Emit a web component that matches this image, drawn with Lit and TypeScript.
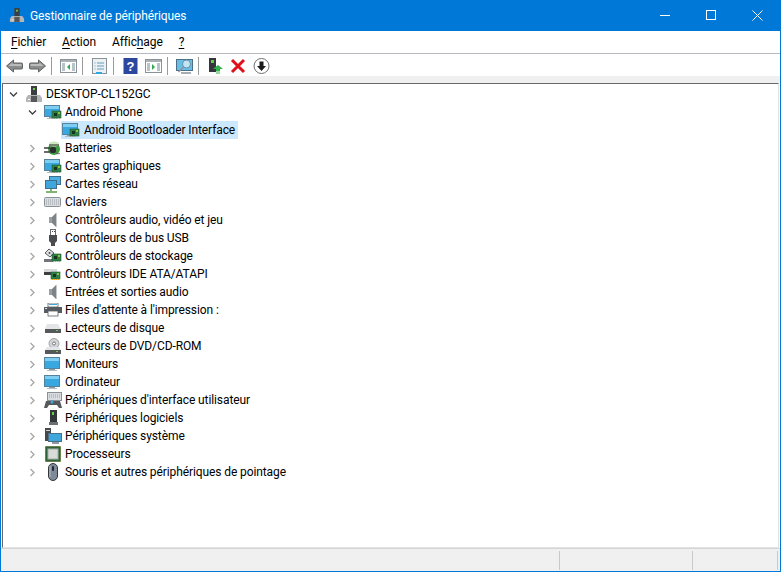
import { LitElement, html, css, svg } from 'lit';
import { customElement } from 'lit/decorators.js';

const screen = (x = 0, y = 0) => svg`
  <rect x="${x + 0.5}" y="${y + 0.5}" width="15" height="11" fill="#3aa8e0" stroke="#55839e"/>
  <rect x="${x + 1}" y="${y + 1}" width="14" height="3" fill="#7fcdf0"/>
  <rect x="${x + 5}" y="${y + 12}" width="6" height="1" fill="#8f9aa3"/>
  <rect x="${x + 3}" y="${y + 13}" width="10" height="1" fill="#b4bcc2"/>`;

const card = (x = 8, y = 7) => svg`
  <rect x="${x}" y="${y}" width="9" height="7" fill="#2d7f45" stroke="#245c34" stroke-width="0.6"/>
  <rect x="${x + 2}" y="${y + 2}" width="3" height="3" fill="#16331f"/>
  <rect x="${x + 6}" y="${y + 1}" width="2" height="2" fill="#8cc63f"/>
  <path d="M${x + 1} ${y + 7.5}h7" stroke="#e3a21a" stroke-dasharray="1 1"/>`;

const adapter = html`<svg viewBox="0 0 18 16">${screen(0, 1)}${card(8, 7)}</svg>`;

const speaker = html`<svg viewBox="0 0 18 16">
  <rect x="5" y="5" width="3" height="6" fill="#9a9fa3"/>
  <path d="M8 5l4-4h1v14h-1l-4-4z" fill="#7d8387"/>
  <path d="M12 1h1v14h-1z" fill="#c5c9cc"/>
</svg>`;

const icons: Record<string, unknown> = {
  computer: html`<svg viewBox="0 0 18 16">
    <rect x="6" y="0" width="6" height="10" fill="#3c3f42"/>
    <rect x="8" y="2" width="2" height="2" fill="#6fce4d"/>
    <path d="M3 9h12l2 3v4H1v-4z" fill="#b3b5b7"/>
    <rect x="6" y="10" width="6" height="6" fill="#55585b"/>
    <rect x="3" y="13" width="2" height="1" fill="#fff"/>
  </svg>`,
  adapter,
  battery: html`<svg viewBox="0 0 18 16">
    <ellipse cx="10" cy="9" rx="6" ry="6" fill="#3f9b42"/>
    <ellipse cx="10" cy="4" rx="5" ry="2.5" fill="#cfe8c4"/>
    <path d="M5 5h10" stroke="#222"/>
    <rect x="6" y="7" width="6" height="6" rx="2" fill="#2b2d2f"/>
    <path d="M0 8h6M0 12h6" stroke="#3a3c3e" stroke-width="1.5"/>
    <path d="M12 13c2 1 3 1 4 0" stroke="#555" fill="none"/>
  </svg>`,
  network: html`<svg viewBox="0 0 18 17">
    <rect x="5.5" y="0.5" width="11" height="8" fill="#4cb0e2" stroke="#3e6f8c"/>
    <rect x="1.5" y="4.5" width="11" height="8" fill="#3fa6dc" stroke="#3e6f8c"/>
    <path d="M7 13v2M2 16h11" stroke="#5a9c4a" stroke-width="1.5"/>
  </svg>`,
  keyboard: html`<svg viewBox="0 0 18 12">
    <rect x="0.5" y="1.5" width="16" height="9" rx="1" fill="#d9dce0" stroke="#8b9096"/>
    <path d="M2 4h13M2 6h13M2 8h13" stroke="#9aa0a6" stroke-dasharray="1 1"/>
  </svg>`,
  speaker,
  usb: html`<svg viewBox="0 0 18 18">
    <rect x="6.5" y="0.5" width="5" height="6" fill="#fff" stroke="#6a6d70"/>
    <rect x="8" y="2" width="1" height="1" fill="#444"/><rect x="10" y="2" width="1" height="1" fill="#444"/>
    <path d="M5 6h8v6l-2 2v3H7v-3l-2-2z" fill="#4a4d50"/>
  </svg>`,
  storage: html`<svg viewBox="0 0 18 16">
    <path d="M1 5l4-4 5 4-4 4z" fill="#dfe1e3" stroke="#55585b"/>
    <circle cx="5.5" cy="5" r="1" fill="#44484b"/>
    <path d="M0 11h9v3H0z" fill="#70757a"/>
    ${card(8, 6)}
  </svg>`,
  ide: html`<svg viewBox="0 0 18 16">
    <rect x="0" y="3" width="13" height="3" fill="#d6d8da"/>
    <rect x="0" y="6" width="13" height="3" fill="#3c3f42"/>
    ${card(7, 6)}
  </svg>`,
  printer: html`<svg viewBox="0 0 18 14">
    <rect x="4" y="0" width="10" height="4" fill="#fff" stroke="#5b6065" stroke-width="0.8"/>
    <rect x="5" y="1" width="8" height="1" fill="#3fa6dc"/>
    <rect x="0" y="4" width="18" height="6" fill="#585c60"/>
    <rect x="4" y="8" width="10" height="5" fill="#fff" stroke="#5b6065" stroke-width="0.8"/>
    <rect x="1" y="5" width="2" height="1" fill="#cfe3ef"/>
  </svg>`,
  disk: html`<svg viewBox="0 0 18 12">
    <path d="M3 2h11l3 5H1z" fill="#e3e5e6"/>
    <rect x="1" y="7" width="16" height="4" fill="#55595c"/>
    <rect x="12" y="8" width="2" height="1" fill="#6fce4d"/>
  </svg>`,
  dvd: html`<svg viewBox="0 0 18 17">
    <circle cx="10" cy="5.5" r="5" fill="#d2d5d8" stroke="#8d9296" stroke-width="0.8"/>
    <circle cx="10" cy="5.5" r="1.5" fill="#fff" stroke="#777"/>
    <path d="M3 9h12l2 3H1z" fill="#e3e5e6"/>
    <rect x="1" y="12" width="16" height="4" fill="#55595c"/>
    <rect x="12" y="13" width="2" height="1" fill="#6fce4d"/>
  </svg>`,
  monitor: html`<svg viewBox="0 0 18 16">${screen(0, 1)}</svg>`,
  hid: html`<svg viewBox="0 0 18 17">
    <rect x="3.5" y="0.5" width="14" height="8" fill="#d9dce0" stroke="#8b9096"/>
    <path d="M5 3h11M5 5h11" stroke="#9aa0a6" stroke-dasharray="1 1"/>
    <path d="M2 9h14l2 7h-3l-2-3H5l-2 3H0z" fill="#55595c"/>
    <circle cx="8" cy="10" r="1.5" fill="#3fa6dc"/>
  </svg>`,
  software: html`<svg viewBox="0 0 18 18">
    <rect x="6" y="1" width="7" height="12" fill="#33363a"/>
    <rect x="8" y="3" width="2" height="3" fill="#63d04a"/>
    <rect x="5" y="13" width="9" height="3" fill="#6c7074"/>
  </svg>`,
  system: html`<svg viewBox="0 0 18 17">
    <rect x="1" y="0" width="6" height="13" fill="#45494c"/>
    <rect x="2" y="2" width="4" height="1" fill="#cfd3d6"/>
    <rect x="4.5" y="5.5" width="13" height="8" fill="#3fa6dc" stroke="#4a6f86"/>
    <path d="M8 15h7" stroke="#8f9aa3" stroke-width="2"/>
  </svg>`,
  cpu: html`<svg viewBox="0 0 18 18">
    <rect x="1.500" y="1.500" width="15" height="15" fill="#31683c" stroke="#b59a3a" stroke-dasharray="1 1"/>
    <rect x="2" y="2" width="14" height="14" fill="none" stroke="#2f5f38"/>
    <rect x="4" y="4" width="10" height="10" fill="#d7dcd8" stroke="#a8afaa"/>
  </svg>`,
  mouse: html`<svg viewBox="0 0 18 18">
    <rect x="4.500" y="0.500" width="9" height="17" rx="4.500" fill="#7e8a99" stroke="#33373b"/>
    <rect x="8" y="3" width="2" height="5" rx="1" fill="#22262a"/>
    <path d="M6 3v11" stroke="#b4bec8"/>
  </svg>`,
};

const groups: [string, string][] = [
  ['battery', 'Batteries'],
  ['adapter', 'Cartes graphiques'],
  ['network', 'Cartes réseau'],
  ['keyboard', 'Claviers'],
  ['speaker', 'Contrôleurs audio, vidéo et jeu'],
  ['usb', 'Contrôleurs de bus USB'],
  ['storage', 'Contrôleurs de stockage'],
  ['ide', 'Contrôleurs IDE ATA/ATAPI'],
  ['speaker', 'Entrées et sorties audio'],
  ['printer', "Files d'attente à l'impression :"],
  ['disk', 'Lecteurs de disque'],
  ['dvd', 'Lecteurs de DVD/CD-ROM'],
  ['monitor', 'Moniteurs'],
  ['monitor', 'Ordinateur'],
  ['hid', "Périphériques d'interface utilisateur"],
  ['software', 'Périphériques logiciels'],
  ['system', 'Périphériques système'],
  ['cpu', 'Processeurs'],
  ['mouse', 'Souris et autres périphériques de pointage'],
];

const chevronDown = html`<svg class="chev" viewBox="0 0 9 9"><path d="M1 2.500l3.500 3.500 3.500-3.500" fill="none" stroke="#404040" stroke-width="1.300"/></svg>`;
const chevronRight = html`<svg class="chev" viewBox="0 0 9 9"><path d="M2.500 1l3.500 3.500-3.500 3.500" fill="none" stroke="#a6a6a6" stroke-width="1.300"/></svg>`;

const arrow = (flip: boolean) => html`<svg class="tool" viewBox="0 0 17 16" style="transform:${flip ? 'scaleX(-1)' : 'none'}">
  <path d="M0.500 8l7-6v3h8a1 1 0 0 1 1 1v4a1 1 0 0 1-1 1h-8v3z" fill="#8a8d8b" stroke="#5f6361"/>
  <path d="M2.500 8l4-3.500v1.500h9v2z" fill="#b9bcba"/>
</svg>`;

const pane = (side: 'l' | 'r') => html`<svg class="tool" viewBox="0 0 17 16">
  <rect x="0.500" y="1.500" width="16" height="13" fill="#fff" stroke="#8a9298"/>
  <rect x="1" y="2" width="15" height="2" fill="#a9b1b7"/>
  <path d="M2 6h3M2 8h3M2 10h3M2 12h3M12 6h3M12 8h3M12 10h3M12 12h3" stroke="#6f8797"/>
  <path d="${side === 'l' ? 'M10 6v6l-3-3z' : 'M7 6v6l3-3z'}" fill="#2fa84f"/>
</svg>`;

@customElement('app-root')
export class AppRoot extends LitElement {
  static styles = css`
    :host {
      display: block;
      width: 781px;
      height: 572px;
      font-family: Roboto, 'Noto Sans', sans-serif;
      font-size: 12px;
      letter-spacing: -0.1px;
      color: #000;
    }

    .window {
      box-sizing: border-box;
      width: 781px;
      height: 572px;
      display: flex;
      flex-direction: column;
      border: 1px solid #0078d7;
      border-top: 0;
      background: #fff;
      overflow: hidden;
    }

    .titlebar {
      height: 31px;
      flex: none;
      display: flex;
      align-items: center;
      background: #0078d7;
      color: #fff;
      padding-left: 8px;
    }

    .titlebar .app-icon {
      width: 16px;
      height: 16px;
      margin-right: 5px;
    }

    .titlebar .title {
      flex: 1;
    }

    .caption {
      width: 46px;
      height: 31px;
      display: flex;
      align-items: center;
      justify-content: center;
    }

    .caption svg {
      width: 11px;
      height: 11px;
    }

    .menubar {
      height: 22px;
      flex: none;
      display: flex;
      align-items: center;
      gap: 16px;
      padding-left: 10px;
      border-bottom: 1px solid #b9b9c4;
    }

    .menubar u {
      text-underline-offset: 2px;
    }

    .toolbar {
      box-sizing: border-box;
      height: 22px;
      flex: none;
      display: flex;
      align-items: center;
      padding: 2px 0 0 2px;
    }

    .tool {
      width: 17px;
      height: 16px;
      margin: 0 3px;
      flex: none;
    }

    .sep {
      width: 1px;
      height: 18px;
      background: #9a9a9a;
      margin: 0 5px 0 2px;
      flex: none;
    }

    .strip {
      height: 7px;
      flex: none;
      background: #f0f0f0;
    }

    .tree {
      flex: 1;
      margin: 0 1px;
      border-left: 1px solid #696969;
      border-right: 1px solid #e3e3e3;
      border-top: 1px solid #696969;
      border-bottom: 1px solid #e3e3e3;
      padding-top: 1px;
      padding-left: 6px;
      overflow: hidden;
    }

    .row {
      height: 18px;
      display: flex;
      align-items: center;
      white-space: nowrap;
    }

    .row.depth1 {
      padding-left: 19px;
    }

    .row.depth2 {
      padding-left: 52px;
    }

    .chev {
      width: 9px;
      height: 9px;
      margin-right: 7px;
      flex: none;
    }

    .icon {
      width: 18px;
      height: 18px;
      margin-right: 3px;
      flex: none;
      display: flex;
      align-items: center;
      justify-content: center;
    }

    .icon svg {
      width: 18px;
      height: auto;
      display: block;
    }

    .selected {
      display: flex;
      align-items: center;
      height: 18px;
      background: #cce8ff;
      padding: 0 3px 0 1px;
    }

    .selected .icon {
      margin-right: 4px;
    }

    .status {
      height: 23px;
      flex: none;
      display: flex;
      background: #f0f0f0;
      padding-top: 2px;
      box-sizing: border-box;
      border-top: 1px solid #d4d4d4;
    }

    .status div {
      border-right: 1px solid #c8c8c8;
      margin-bottom: 1px;
      box-sizing: border-box;
    }

    .status .main {
      width: 559px;
    }

    .status .a {
      width: 133px;
    }

    .status .b {
      width: 85px;
    }
  `;

  render() {
    return html`
      <div class="window">
        <div class="titlebar">
          <span class="app-icon">${icons.computer}</span>
          <span class="title">Gestionnaire de périphériques</span>
          <span class="caption"><svg viewBox="0 0 11 11"><path d="M0 5.500h10" stroke="#fff"/></svg></span>
          <span class="caption"><svg viewBox="0 0 11 11"><rect x="0.500" y="0.500" width="9" height="9" fill="none" stroke="#fff"/></svg></span>
          <span class="caption"><svg viewBox="0 0 11 11"><path d="M0.500 0.500l10 10M10.500 0.500l-10 10" stroke="#fff"/></svg></span>
        </div>
        <div class="menubar">
          <span><u>F</u>ichier</span>
          <span><u>A</u>ction</span>
          <span>Affic<u>h</u>age</span>
          <span><u>?</u></span>
        </div>
        <div class="toolbar">
          ${arrow(false)} ${arrow(true)}
          <span class="sep"></span>
          ${pane('l')}
          <span class="sep"></span>
          <svg class="tool" viewBox="0 0 17 16">
            <rect x="1.500" y="0.500" width="14" height="15" fill="#eef1f3" stroke="#8a9298"/>
            <path d="M6 5h7M6 8h7M6 11h7" stroke="#5f9ec4"/>
            <path d="M3.500 5h1M3.500 8h1M3.500 11h1" stroke="#5f9ec4"/>
            <rect x="5" y="14" width="6" height="2" fill="#2fa8e0"/>
          </svg>
          <span class="sep"></span>
          <svg class="tool" viewBox="0 0 17 16">
            <rect x="1.500" y="0" width="14" height="16" fill="#2b479e"/>
            <text x="8.500" y="13" font-size="13" font-weight="700" text-anchor="middle" fill="#fff" font-family="Liberation Sans">?</text>
          </svg>
          ${pane('r')}
          <span class="sep"></span>
          <svg class="tool" viewBox="0 0 17 16">
            <rect x="0.500" y="1.500" width="16" height="11" fill="#67bfe8" stroke="#4a6f86"/>
            <circle cx="10.500" cy="6" r="4" fill="#bfe5f6" stroke="#6a8ea3"/>
            <path d="M7.500 9l-5 5M5 15h10" stroke="#8b9298" stroke-width="1.300"/>
          </svg>
          <span class="sep"></span>
          <svg class="tool" viewBox="0 0 17 16">
            <rect x="2" y="0" width="7" height="14" fill="#33363a"/>
            <rect x="4" y="2" width="3" height="3" fill="#63d04a"/>
            <path d="M11 7l5 4h-3v2H9v-2H6z" fill="#2fb04a"/>
            <path d="M9 14h4M9 16h4" stroke="#2fb04a"/>
          </svg>
          <svg class="tool" viewBox="0 0 17 16">
            <path d="M2 2l12 12M14 2L2 14" stroke="#e0101a" stroke-width="3"/>
          </svg>
          <svg class="tool" viewBox="0 0 17 16">
            <circle cx="8.500" cy="8" r="7.500" fill="#fff" stroke="#6c7074"/>
            <path d="M6.500 3.500h4V8H13l-4.500 5L4 8h2.500z" fill="#1a1a1a"/>
          </svg>
        </div>
        <div class="strip"></div>
        <div class="tree">
          <div class="row">
            ${chevronDown}
            <span class="icon">${icons.computer}</span>DESKTOP-CL152GC
          </div>
          <div class="row depth1">
            ${chevronDown}
            <span class="icon">${icons.adapter}</span>Android Phone
          </div>
          <div class="row depth2">
            <span class="selected"><span class="icon">${icons.adapter}</span>Android Bootloader Interface</span>
          </div>
          ${groups.map(
            ([icon, label]) => html`
              <div class="row depth1">
                ${chevronRight}
                <span class="icon">${icons[icon]}</span>${label}
              </div>
            `,
          )}
        </div>
        <div class="status">
          <div class="main"></div>
          <div class="a"></div>
          <div class="b"></div>
        </div>
      </div>
    `;
  }
}
